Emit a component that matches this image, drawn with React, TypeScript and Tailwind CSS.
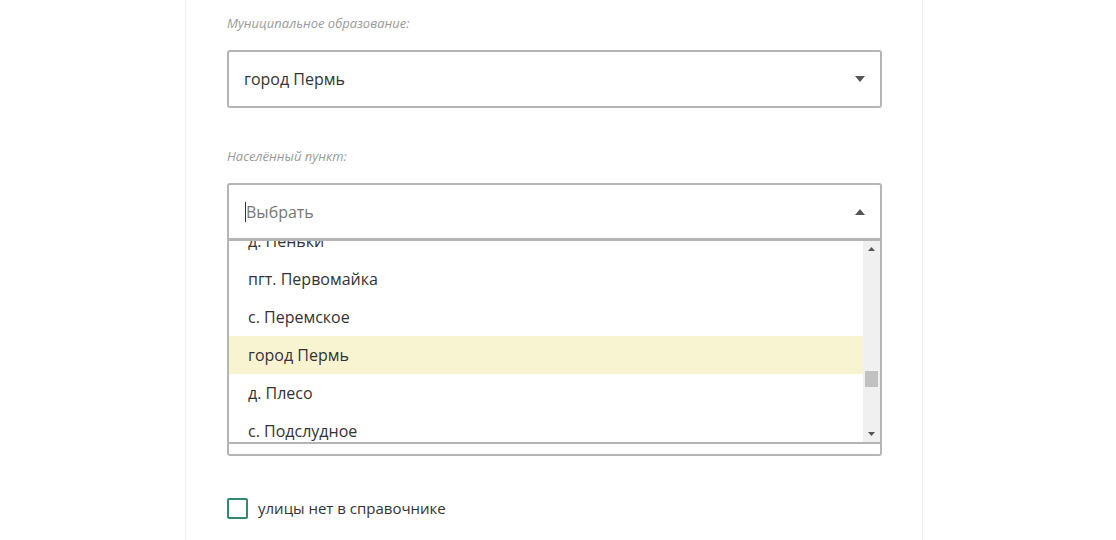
const ITEMS = ['д. Пеньки', 'пгт. Первомайка', 'с. Перемское', 'город Пермь', 'д. Плесо', 'с. Подслудное', 'д. Поляна'];

function Tri({ up }: { up?: boolean }) {
  return (
    <svg width="10" height="6" viewBox="0 0 10 6" className="shrink-0">
      <path d={up ? 'M0 6 L5 0 L10 6 Z' : 'M0 0 L5 6 L10 0 Z'} fill="#555" />
    </svg>
  );
}

export default function App() {
  return (
    <div className="w-[1116px] h-[540px] bg-white flex overflow-hidden pl-[185px]" style={{ fontFamily: '"Open Sans", sans-serif' }}>
      <div className="w-[738px] h-full border-x border-[#eeeeee] pl-[41px] pr-[40px] pt-[14px] flex flex-col">
        <div className="text-[13px] italic text-[#9a9a9a] leading-[19px]">Муниципальное образование:</div>
        <div className="mt-[17px] h-[58px] border-2 border-[#b5b5b5] rounded-[3px] flex items-center justify-between pl-[15px] pr-[15px]">
          <span className="text-[16px] text-[#333]">город Пермь</span>
          <Tri />
        </div>
        <div className="mt-[39px] text-[13px] italic text-[#9a9a9a] leading-[19px]">Населённый пункт:</div>
        <div className="mt-[17px] relative">
          <div className="h-[58px] border-2 border-[#b5b5b5] border-b-[3px] rounded-t-[3px] flex items-center justify-between pl-[16px] pr-[15px]">
            <span className="text-[16px] text-[#777] border-l border-[#333] leading-[20px]">Выбрать</span>
            <Tri up />
          </div>
          <div className="h-[215px] border-2 border-t-0 border-[#b5b5b5] rounded-b-[3px]">
            <div className="h-[203px] flex border-b-2 border-[#b5b5b5]">
              <div className="flex-1 overflow-hidden">
                <div className="-mt-[19px]">
                  {ITEMS.map((t) => (
                    <div key={t} className={`h-[38px] flex items-center pl-[19px] text-[16px] text-[#333] ${t === 'город Пермь' ? 'bg-[#f8f4d2]' : ''}`}>{t}</div>
                  ))}
                </div>
              </div>
              <div className="w-[17px] bg-[#f0f0f0] flex flex-col items-center justify-between py-[6px]">
                <svg width="7" height="4" viewBox="0 0 7 4"><path d="M0 4 L3.5 0 L7 4 Z" fill="#555" /></svg>
                <div className="flex-1 w-full relative">
                  <div className="absolute left-[2px] right-[2px] top-[120px] h-[16px] bg-[#c1c1c1]" />
                </div>
                <svg width="7" height="4" viewBox="0 0 7 4"><path d="M0 0 L3.5 4 L7 0 Z" fill="#555" /></svg>
              </div>
            </div>
          </div>
        </div>
        <div className="mt-[41px] flex items-center gap-[10px]">
          <div className="w-[21px] h-[21px] border-2 border-[#2f8a72] rounded-[2px]" />
          <span className="text-[15px] text-[#333]">улицы нет в справочнике</span>
        </div>
      </div>
    </div>
  );
}
